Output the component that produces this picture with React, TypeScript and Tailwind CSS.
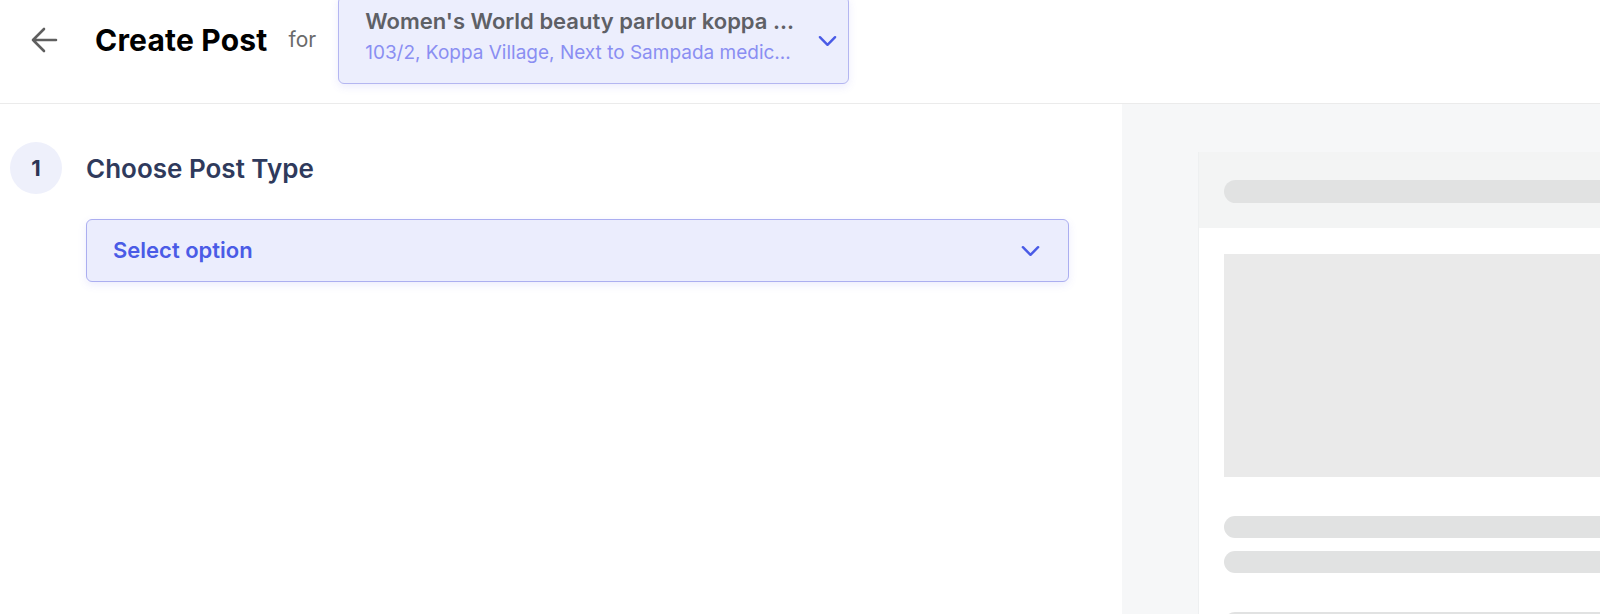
import React from "react";

const Chevron: React.FC<{ className?: string }> = ({ className }) => (
  <svg
    viewBox="0 0 20 12"
    fill="none"
    stroke="currentColor"
    strokeWidth={2.6}
    strokeLinecap="round"
    strokeLinejoin="round"
    className={className}
  >
    <path d="M2 2l8 8 8-8" />
  </svg>
);

const App: React.FC = () => {
  return (
    <div
      className="w-full h-[614px] overflow-hidden bg-white flex flex-col"
      style={{ fontFamily: "Inter, 'Noto Sans', sans-serif" }}
    >
      {/* top bar */}
      <header className="h-[104px] shrink-0 border-b border-[#ebebeb] flex items-start">
        <div className="h-[80px] flex items-center">
          <button className="ml-[30px] text-[#5f5f5f]">
            <svg
              viewBox="0 0 28 28"
              className="w-[28px] h-[28px]"
              fill="none"
              stroke="currentColor"
              strokeWidth={2.6}
              strokeLinecap="round"
              strokeLinejoin="round"
            >
              <path d="M26 14H3M14 3L3 14l11 11" />
            </svg>
          </button>
          <h1 className="ml-[37px] text-[30px] font-bold text-black tracking-[0.2px]">Create Post</h1>
          <span className="ml-[21px] text-[21px] text-[#6a6a6a]">for</span>
          <div className="ml-[22px] w-[511px] shrink-0 h-[88px] rounded-md border border-[#b4b6f1] bg-[#eceefd] shadow-[0_3px_8px_rgba(99,102,241,0.12)] flex items-center pl-[26px] pr-[10px]">
            <div className="flex-1 min-w-0 mb-[8px]">
              <div className="text-[22px] font-semibold text-[#5e6066] whitespace-nowrap overflow-hidden leading-[26px]">
                Women's World beauty parlour koppa ...
              </div>
              <div className="text-[19px] text-[#8a8ef2] whitespace-nowrap overflow-hidden leading-[24px] mt-[7px]">
                103/2, Koppa Village, Next to Sampada medic...
              </div>
            </div>
            <Chevron className="w-[19px] h-[12px] shrink-0 text-[#4a5be6] ml-[12px] mr-[1px] mt-[2px]" />
          </div>
        </div>
      </header>

      <div className="flex flex-1 min-h-0">
        {/* form column */}
        <main className="w-[1122px] shrink-0 pt-[38px] pl-[10px] pr-[53px]">
          <div className="flex items-center">
            <div className="w-[52px] h-[52px] rounded-full bg-[#eef0fb] flex items-center justify-center text-[22px] font-bold text-[#2d3555]">
              1
            </div>
            <h2 className="ml-[24px] text-[26px] font-semibold text-[#2f3a5c]">
              Choose Post Type
            </h2>
          </div>
          <div className="ml-[76px] mt-[25px] h-[63px] rounded-md border border-[#abaef0] bg-[#ebedfd] shadow-[0_3px_8px_rgba(99,102,241,0.12)] flex items-center justify-between pl-[26px] pr-[28px]">
            <span className="text-[22px] font-semibold text-[#4a5be6]">Select option</span>
            <Chevron className="w-[19px] h-[12px] text-[#4a5be6]" />
          </div>
        </main>

        {/* preview column */}
        <aside className="flex-1 min-w-0 overflow-hidden bg-[#f6f7f8] pt-[48px] pl-[76px]">
          <div className="w-[600px] h-full bg-white border-l border-[#eef0f1]">
            <div className="h-[76px] bg-[#f3f4f4] pt-[28px] pl-[25px]">
              <div className="h-[23px] rounded-full bg-[#e1e2e2]" />
            </div>
            <div className="pt-[26px] pl-[25px]">
              <div className="h-[223px] bg-[#eaeaea]" />
              <div className="mt-[39px] h-[22px] rounded-full bg-[#e1e2e2]" />
              <div className="mt-[13px] h-[22px] rounded-full bg-[#e1e2e2]" />
              <div className="mt-[39px] h-[22px] rounded-full bg-[#e1e2e2]" />
            </div>
          </div>
        </aside>
      </div>
    </div>
  );
};

export default App;
